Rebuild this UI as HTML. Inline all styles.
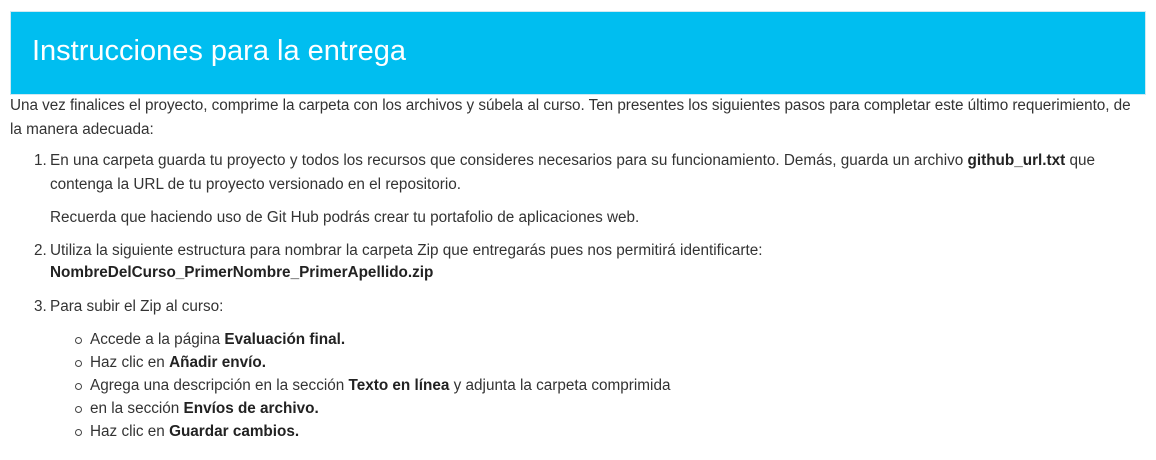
<!DOCTYPE html>
<html><head><meta charset="utf-8"><style>
body{margin:0;width:1156px;height:460px;background:#fff;font-family:"Liberation Sans",sans-serif;color:#333;font-size:15.3px;position:relative;overflow:hidden}
.h{position:absolute;left:10px;top:11px;width:1134px;height:82px;background:#00bef0;border:1px solid #cfe9f2}
.h span{position:absolute;left:21px;top:23px;color:#fff;font-size:29px;white-space:nowrap}
.l{position:absolute;line-height:22px;white-space:nowrap}
b{font-weight:bold;color:#222}
.c{position:absolute;width:5px;height:5px;border:1px solid #444;border-radius:50%}
</style></head><body>
<div class="h"><span>Instrucciones para la entrega</span></div>
<div class="l" style="left:10px;top:95px;letter-spacing:-0.05px">Una vez finalices el proyecto, comprime la carpeta con los archivos y súbela al curso. Ten presentes los siguientes pasos para completar este último requerimiento, de</div>
<div class="l" style="left:10px;top:119px">la manera adecuada:</div>
<div class="l" style="left:34px;top:150px">1.</div>
<div class="l" style="left:50px;top:150px">En una carpeta guarda tu proyecto y todos los recursos que consideres necesarios para su funcionamiento. Demás, guarda un archivo <b>github_url.txt</b> que</div>
<div class="l" style="left:50px;top:174px">contenga la URL de tu proyecto versionado en el repositorio.</div>
<div class="l" style="left:50px;top:207px">Recuerda que haciendo uso de Git Hub podrás crear tu portafolio de aplicaciones web.</div>
<div class="l" style="left:34px;top:240px">2.</div>
<div class="l" style="left:50px;top:240px">Utiliza la siguiente estructura para nombrar la carpeta Zip que entregarás pues nos permitirá identificarte:</div>
<div class="l" style="left:50px;top:262px"><b>NombreDelCurso_PrimerNombre_PrimerApellido.zip</b></div>
<div class="l" style="left:34px;top:296px">3.</div>
<div class="l" style="left:50px;top:296px">Para subir el Zip al curso:</div>
<div class="c" style="left:75px;top:337px"></div><div class="l" style="left:90px;top:329px">Accede a la página <b>Evaluación final.</b></div>
<div class="c" style="left:75px;top:360px"></div><div class="l" style="left:90px;top:352px">Haz clic en <b>Añadir envío.</b></div>
<div class="c" style="left:75px;top:383px"></div><div class="l" style="left:90px;top:375px">Agrega una descripción en la sección <b>Texto en línea</b> y adjunta la carpeta comprimida</div>
<div class="c" style="left:75px;top:406px"></div><div class="l" style="left:90px;top:398px">en la sección <b>Envíos de archivo.</b></div>
<div class="c" style="left:75px;top:429px"></div><div class="l" style="left:90px;top:421px">Haz clic en <b>Guardar cambios.</b></div>
</body></html>
